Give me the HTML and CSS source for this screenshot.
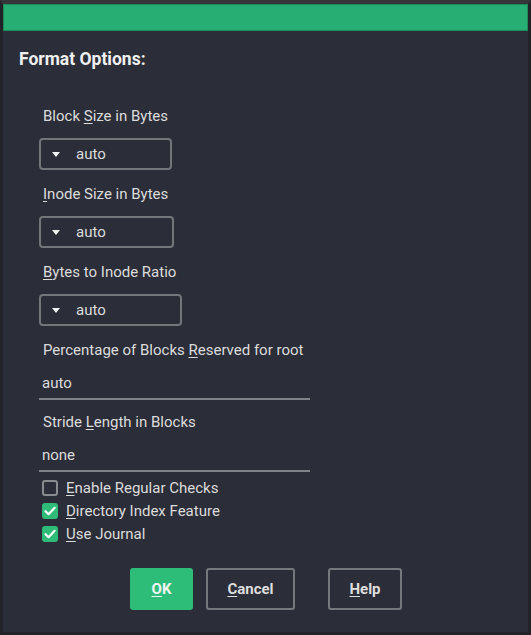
FILE: index.html
```html
<!DOCTYPE html>
<html>
<head>
<meta charset="utf-8">
<link rel="stylesheet" href="styles.css">
</head>
<body>
<div class="frame">
  <div class="titlebar"></div>
  <div class="content">
    <div class="heading">Format Options:</div>
    <div class="form">
      <div class="label l-first">Block <u>S</u>ize in Bytes</div>
      <div class="combo w1"><span class="arrow"></span><span class="cval">auto</span></div>
      <div class="label"><u>I</u>node Size in Bytes</div>
      <div class="combo w2"><span class="arrow"></span><span class="cval">auto</span></div>
      <div class="label"><u>B</u>ytes to Inode Ratio</div>
      <div class="combo w3"><span class="arrow"></span><span class="cval">auto</span></div>
      <div class="label l-entry">Percentage of Blocks <u>R</u>eserved for root</div>
      <div class="entry">auto</div>
      <div class="label l-entry l-after-entry">Stride <u>L</u>ength in Blocks</div>
      <div class="entry">none</div>
      <div class="checks">
        <div class="check"><span class="box"></span><span><u>E</u>nable Regular Checks</span></div>
        <div class="check"><span class="box on"><svg viewBox="0 0 16 16" width="16" height="16"><path d="M3.5 8.2 L6.6 11.2 L12.6 4.8" fill="none" stroke="#fff" stroke-width="2.2" stroke-linecap="round" stroke-linejoin="round"/></svg></span><span><u>D</u>irectory Index Feature</span></div>
        <div class="check"><span class="box on"><svg viewBox="0 0 16 16" width="16" height="16"><path d="M3.5 8.2 L6.6 11.2 L12.6 4.8" fill="none" stroke="#fff" stroke-width="2.2" stroke-linecap="round" stroke-linejoin="round"/></svg></span><span><u>U</u>se Journal</span></div>
      </div>
    </div>
    <div class="buttons">
      <div class="btn ok"><u>O</u>K</div>
      <div class="btn cancel"><u>C</u>ancel</div>
      <div class="btn help"><u>H</u>elp</div>
    </div>
  </div>
</div>
</body>
</html>
```
FILE: styles.css
```css
html, body {
  margin: 0;
  padding: 0;
  background: #222328;
}
.frame {
  box-sizing: border-box;
  width: 531px;
  height: 635px;
  border-top: 4px solid #36373b;
  border-left: 3px solid #222328;
  border-right: 3px solid #222328;
  border-bottom: 3px solid #222328;
  background: #2b2d38;
  font-family: Roboto, "Liberation Sans", sans-serif;
  color: #dcdcdc;
  font-size: 15px;
}
.titlebar {
  box-sizing: border-box;
  height: 27px;
  background: #27ae73;
  border: 1px solid #1e8a5b;
}
.content {
  padding: 18px 0 0 16px;
}
.heading {
  font-size: 17.5px;
  font-weight: bold;
  line-height: 20px;
  color: #f0f0f0;
}
.form {
  padding-left: 20px;
  display: flex;
  flex-direction: column;
  align-items: flex-start;
}
u {
  text-decoration: underline;
  text-underline-offset: 2px;
}
.label {
  line-height: 20px;
  margin-left: 4px;
  margin-top: 14px;
  margin-bottom: 12px;
}
.l-first {
  margin-top: 37px;
}
.l-entry {
  margin-bottom: 0;
}
.l-after-entry {
  margin-top: 12px;
}
.combo {
  box-sizing: border-box;
  height: 32px;
  border: 2px solid #74757b;
  border-radius: 4px;
  display: flex;
  align-items: center;
  padding-left: 11px;
}
.w1 { width: 133px; }
.w2 { width: 135px; }
.w3 { width: 143px; }
.arrow {
  width: 0;
  height: 0;
  border-left: 4px solid transparent;
  border-right: 4px solid transparent;
  border-top: 5px solid #f2f2f2;
}
.cval {
  margin-left: 16px;
  line-height: 20px;
}
.entry {
  box-sizing: border-box;
  width: 271px;
  padding: 13px 3px 5px;
  line-height: 20px;
  border-bottom: 2px solid #808189;
}
.checks {
  margin-top: 8px;
  display: flex;
  flex-direction: column;
  gap: 7px;
  margin-left: 3px;
}
.check {
  display: flex;
  align-items: center;
  gap: 8px;
  line-height: 16px;
}
.box {
  box-sizing: border-box;
  width: 16px;
  height: 16px;
  border: 2px solid #8a8b90;
  border-radius: 3px;
  display: flex;
}
.box.on {
  background: #2ebc78;
  border: none;
}
.buttons {
  display: flex;
  margin-top: 26px;
  padding-left: 111px;
}
.btn {
  box-sizing: border-box;
  height: 42px;
  border-radius: 3px;
  border: 2px solid #77787e;
  display: flex;
  align-items: center;
  justify-content: center;
  font-weight: bold;
  color: #dedede;
}
.ok {
  width: 63px;
  background: #2ebd78;
  border-color: #2ebd78;
  color: #f4f4f4;
}
.cancel {
  width: 89px;
  margin-left: 13px;
}
.help {
  width: 74px;
  margin-left: 33px;
}
```
